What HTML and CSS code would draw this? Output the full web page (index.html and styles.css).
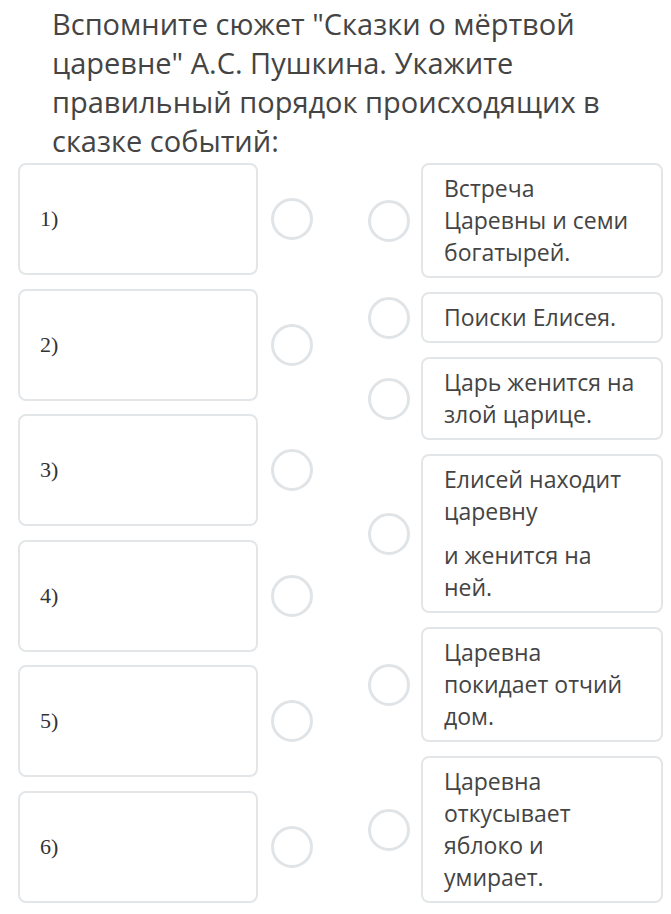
FILE: index.html
```html
<!DOCTYPE html>
<html lang="ru">
<head>
    <meta charset="UTF-8">
    <meta name="viewport" content="width=device-width, initial-scale=1.0">
    <title>Сказка о мёртвой царевне</title>
    <link rel="stylesheet" href="styles.css">
</head>
<body>
    <div class="question">
        <p class="question-text">Вспомните сюжет "Сказки о мёртвой царевне" А.С. Пушкина. Укажите правильный порядок происходящих в сказке событий:</p>

        <div class="match">
            <div class="targets">
                <div class="target-row"><div class="slot">1)</div><span class="dot"></span></div>
                <div class="target-row"><div class="slot">2)</div><span class="dot"></span></div>
                <div class="target-row"><div class="slot">3)</div><span class="dot"></span></div>
                <div class="target-row"><div class="slot">4)</div><span class="dot"></span></div>
                <div class="target-row"><div class="slot">5)</div><span class="dot"></span></div>
                <div class="target-row"><div class="slot">6)</div><span class="dot"></span></div>
            </div>

            <div class="options">
                <div class="option-row"><span class="dot"></span><div class="option"><p>Встреча Царевны и семи богатырей.</p></div></div>
                <div class="option-row"><span class="dot"></span><div class="option"><p>Поиски Елисея.</p></div></div>
                <div class="option-row"><span class="dot"></span><div class="option"><p>Царь женится на злой царице.</p></div></div>
                <div class="option-row"><span class="dot"></span><div class="option"><p>Елисей находит царевну</p><p>и женится на ней.</p></div></div>
                <div class="option-row"><span class="dot"></span><div class="option"><p>Царевна покидает отчий дом.</p></div></div>
                <div class="option-row"><span class="dot"></span><div class="option"><p>Царевна откусывает яблоко и умирает.</p></div></div>
            </div>
        </div>
    </div>
</body>
</html>
```

FILE: styles.css
```css
body {
    margin: 0;
    background: #fff;
    font-family: "Open Sans", Arial, sans-serif;
    color: #444;
}

.question {
    padding: 4px 0 0 18px;
}

.question-text {
    margin: 0 0 3px 34px;
    width: 600px;
    font-size: 29px;
    line-height: 39px;
}

.match {
    display: flex;
    align-items: flex-start;
}

.targets {
    display: flex;
    flex-direction: column;
    gap: 13.5px;
}

.target-row {
    display: flex;
    align-items: center;
    gap: 13px;
}

.slot {
    box-sizing: border-box;
    width: 240px;
    height: 112px;
    padding-left: 20px;
    display: flex;
    align-items: center;
    border: 2px solid #e3e6e8;
    border-radius: 8px;
    font-family: "Liberation Serif", "DejaVu Serif", serif;
    font-size: 22px;
    color: #333;
}

.dot {
    box-sizing: border-box;
    width: 42px;
    height: 42px;
    flex: none;
    border: 3px solid #e1e4e7;
    border-radius: 50%;
}

.options {
    display: flex;
    flex-direction: column;
    gap: 14px;
    margin-left: 55px;
}

.option-row {
    display: flex;
    align-items: center;
    gap: 11px;
}

.option {
    box-sizing: border-box;
    width: 242px;
    padding: 7px 25px 8px 21px;
    border: 2px solid #e3e6e8;
    border-radius: 8px;
    font-size: 23px;
    line-height: 32px;
}

.option p {
    margin: 0;
}

.option p + p {
    margin-top: 12px;
}
```
